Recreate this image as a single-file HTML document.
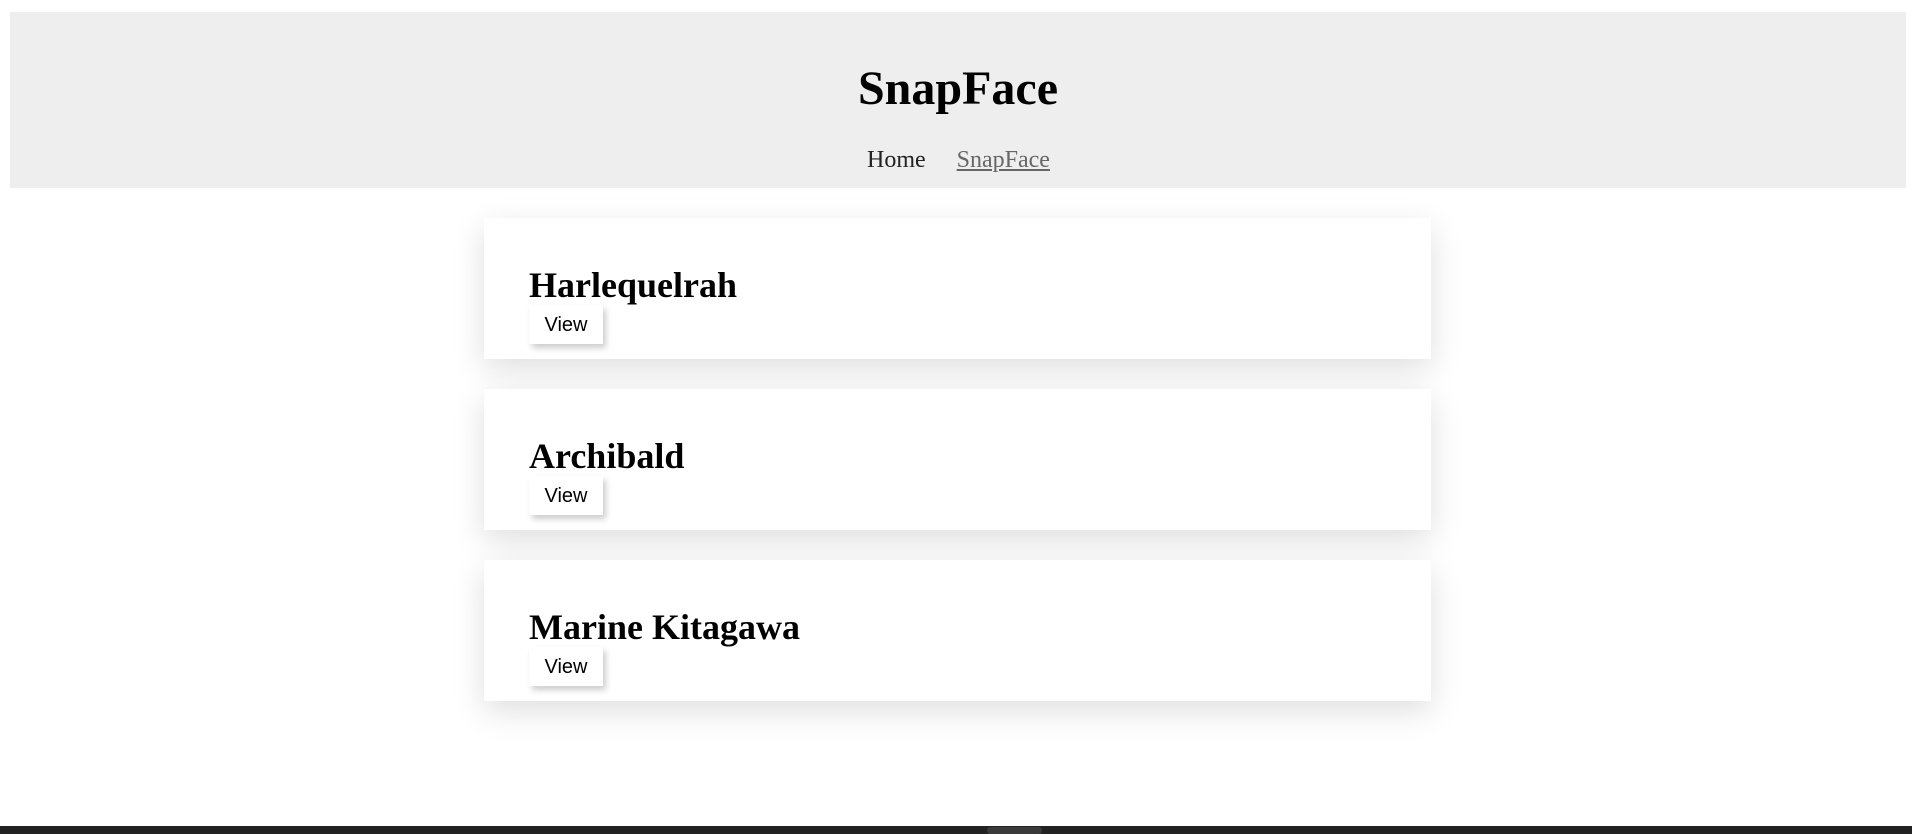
<!DOCTYPE html>
<html><head><meta charset="utf-8"><style>
html,body{margin:0;padding:0;background:#fff;width:1912px;height:834px;overflow:hidden;position:relative;font-family:"Liberation Serif",serif}
.hdr{position:absolute;left:10px;top:12px;width:1896px;height:176px;background:#eee}
.t{position:absolute;left:2px;width:1912px;text-align:center;top:59px;font-size:48px;font-weight:bold;line-height:60px;margin:0;color:#000}
.nav{position:absolute;left:867px;top:146px;font-size:24px;line-height:28px;color:#222}
.nav span{margin-right:31px}
.nav a{color:#666;text-decoration:underline}
.card{position:absolute;left:484px;width:947px;height:141px;background:#fff;box-shadow:0 10px 30px rgba(0,0,0,0.13)}
.card h2{position:absolute;left:45px;top:46px;margin:0;font-size:36px;line-height:42px;font-weight:bold}
.btn{position:absolute;left:45px;top:87px;width:74px;height:39px;background:#fff;box-shadow:3px 4px 6px rgba(0,0,0,0.2);font-family:"Liberation Sans",sans-serif;font-size:20px;line-height:41px;text-align:center}
.foot{position:absolute;left:0;top:826px;width:1912px;height:8px;background:#222}
.foot div{position:absolute;left:987px;top:1px;width:55px;height:7px;background:#3a3a3a;border-radius:3px}
</style></head><body>
<div class="hdr"></div>
<h1 class="t">SnapFace</h1>
<div class="nav"><span>Home</span><a>SnapFace</a></div>
<div class="card" style="top:218px"><h2>Harlequelrah</h2><div class="btn">View</div></div>
<div class="card" style="top:389px"><h2>Archibald</h2><div class="btn">View</div></div>
<div class="card" style="top:560px"><h2>Marine Kitagawa</h2><div class="btn">View</div></div>
<div class="foot"><div></div></div>
</body></html>
